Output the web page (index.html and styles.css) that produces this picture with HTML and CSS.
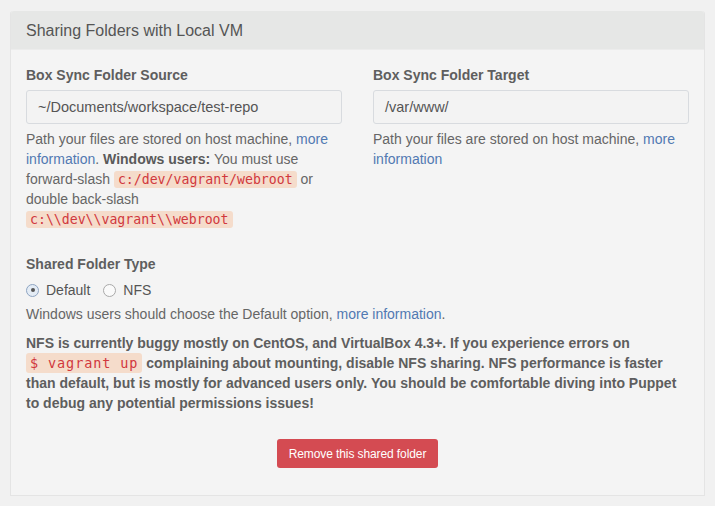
FILE: index.html
```html
<!DOCTYPE html>
<html>
<head>
<meta charset="utf-8">
<link rel="stylesheet" href="styles.css">
</head>
<body>
<div class="panel">
  <div class="panel-head">Sharing Folders with Local VM</div>
  <div class="panel-body">
    <div class="cols">
      <div class="col">
        <div class="label">Box Sync Folder Source</div>
        <div class="input">~/Documents/workspace/test-repo</div>
        <p class="help">Path your files are stored on host machine, <a href="#">more information</a>. <b>Windows users:</b> You must use <span class="nw">forward-slash</span> <code>c:/dev/vagrant/webroot</code> or double <span class="nw">back-slash</span> <code>c:\\dev\\vagrant\\webroot</code></p>
      </div>
      <div class="col">
        <div class="label">Box Sync Folder Target</div>
        <div class="input">/var/www/</div>
        <p class="help">Path your files are stored on host machine, <a href="#">more information</a></p>
      </div>
    </div>
    <div class="label type-label">Shared Folder Type</div>
    <div class="radios">
      <label class="radio"><span class="dot checked"></span>Default</label>
      <label class="radio"><span class="dot"></span>NFS</label>
    </div>
    <p class="help note">Windows users should choose the Default option, <a href="#">more information</a>.</p>
    <p class="help warn">NFS is currently buggy mostly on CentOS, and VirtualBox 4.3+. If you experience errors on <code>$ vagrant up</code> complaining about mounting, disable NFS sharing. NFS performance is faster than default, but is mostly for advanced users only. You should be comfortable diving into Puppet to debug any potential permissions issues!</p>
    <div class="actions"><button class="btn-danger">Remove this shared folder</button></div>
  </div>
</div>
</body>
</html>
```
FILE: styles.css
```css
html, body {
  margin: 0;
  background: #f1f1f1;
}
body {
  padding: 11px 10px 0 10px;
  font-family: "Liberation Sans", Arial, sans-serif;
  font-size: 14px;
  color: #666;
}
.panel {
  width: 693px;
  background: #f4f4f4;
  border: 1px solid #e4e4e4;
  border-top: none;
  border-radius: 3px 3px 0 0;
}
.panel-head {
  height: 38px;
  line-height: 40px;
  background: #e6e7e6;
  padding-left: 15px;
  font-size: 16px;
  color: #555;
  border-bottom: 1px solid #ececec;
  border-radius: 3px 3px 0 0;
}
.panel-body {
  padding: 16px 15px 27px 15px;
}
.cols {
  display: flex;
  gap: 31px;
}
.col {
  width: 316px;
}
.label {
  font-weight: bold;
  line-height: 18px;
  color: #5e5e5e;
}
.input {
  margin-top: 6px;
  height: 32px;
  line-height: 32px;
  padding: 0 11px;
  border: 1px solid #d8dbdf;
  border-radius: 3px;
  background: #f3f3f3;
  color: #555;
  font-size: 14.5px;
}
.help {
  margin: 5px 0 0 0;
  line-height: 20px;
}
.nw {
  white-space: nowrap;
}
a {
  color: #5179b2;
  text-decoration: none;
}
b {
  color: #5a5a5a;
}
code {
  font-family: "DejaVu Sans Mono", monospace;
  font-size: 13.2px;
  line-height: 1;
  white-space: nowrap;
  color: #d1383d;
  background: #f5dccb;
  border-radius: 3px;
  padding: 1px 4px;
}
.type-label {
  margin-top: 26px;
}
.radios {
  display: flex;
  gap: 13px;
  margin-top: 7px;
  height: 20px;
  align-items: center;
}
.radio {
  display: flex;
  align-items: center;
  gap: 7px;
  color: #555;
  font-size: 14px;
}
.dot {
  width: 11px;
  height: 11px;
  border: 1px solid #a9a9a9;
  border-radius: 50%;
  background: #fafafa;
  position: relative;
}
.dot.checked {
  border-color: #8ea4c2;
  background: #e4ecf5;
}
.dot.checked::after {
  content: "";
  position: absolute;
  left: 3.5px;
  top: 3.5px;
  width: 4px;
  height: 4px;
  border-radius: 50%;
  background: #555;
}
.note {
  margin-top: 4px;
}
.warn {
  margin-top: 9px;
  font-weight: bold;
  color: #5e5e5e;
}
.warn code {
  font-weight: normal;
  font-size: 13.5px;
  letter-spacing: 0.9px;
  padding: 2px 4px;
}
.actions {
  margin-top: 26px;
  display: flex;
  justify-content: center;
}
.btn-danger {
  width: 161px;
  height: 29px;
  border: none;
  border-radius: 3px;
  background: #d44b52;
  color: #fff;
  font-family: "Liberation Sans", Arial, sans-serif;
  font-size: 12px;
  letter-spacing: -0.1px;
  padding: 0;
}
```
